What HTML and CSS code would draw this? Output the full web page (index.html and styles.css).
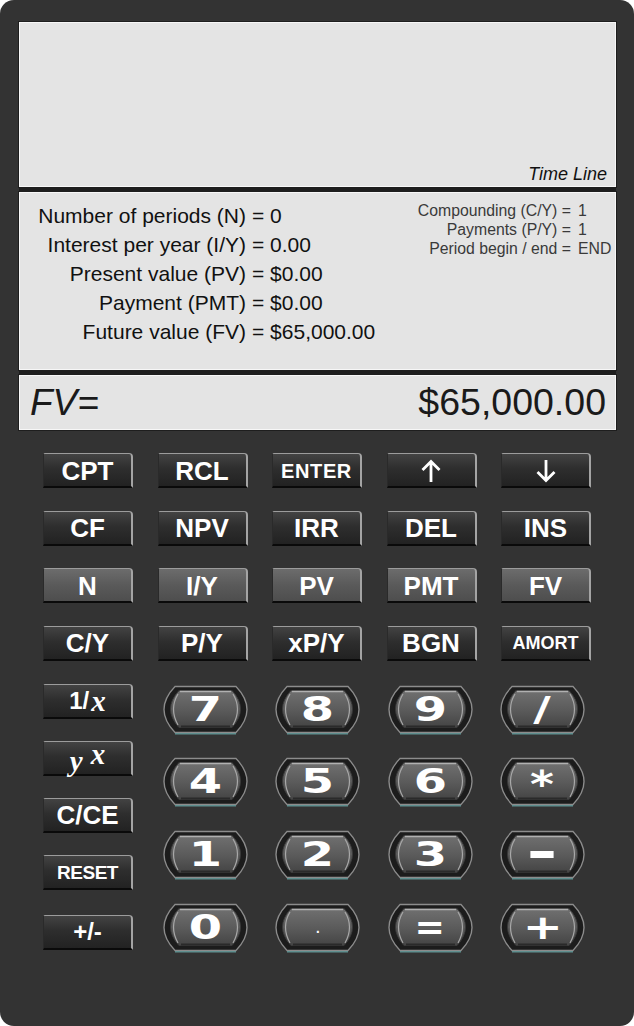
FILE: index.html
```html
<!DOCTYPE html>
<html>
<head>
<meta charset="utf-8">
<link rel="stylesheet" href="styles.css">
</head>
<body>
<svg class="defs" width="0" height="0" aria-hidden="true">
  <defs>
    <linearGradient id="face" x1="0" y1="0" x2="0" y2="1">
      <stop offset="0" stop-color="#707070"/>
      <stop offset="0.55" stop-color="#5a5a5a"/>
      <stop offset="1" stop-color="#444"/>
    </linearGradient>
    <symbol id="nkey" viewBox="0 0 85 50">
      <path d="M12,1.5 H73 Q95,24.5 73,47.5 H12 Q-10,24.5 12,1.5 Z" fill="#1c1c1c" stroke="#8c8c8c" stroke-width="1.3"/>
      <path d="M16,5.5 H69 Q86,24 69,42.5 H16 Q-1,24 16,5.5 Z" fill="url(#face)" stroke="#3a3a3a" stroke-width="1"/>
      <path d="M17,6.5 H68" stroke="#b0b0b0" stroke-width="1.4" fill="none"/>
      <path d="M15,9 Q6,24 15,40" stroke="#a8a8a8" stroke-width="1.2" fill="none"/>
      <path d="M70,9 Q79,24 70,40" stroke="#a8a8a8" stroke-width="1.2" fill="none"/>
      <path d="M18,41.5 H67" stroke="#2a2a2a" stroke-width="2" fill="none"/>
      <path d="M12,48.8 H73" stroke="#5f8f8f" stroke-width="1.6" fill="none"/>
    </symbol>
  </defs>
</svg>

<div class="calc">
  <div class="screen timeline"><span class="tl-label">Time Line</span></div>

  <div class="screen info">
    <div class="vars">
      <span class="lbl">Number of periods (N)</span><span class="val">= 0</span>
      <span class="lbl">Interest per year (I/Y)</span><span class="val">= 0.00</span>
      <span class="lbl">Present value (PV)</span><span class="val">= $0.00</span>
      <span class="lbl">Payment (PMT)</span><span class="val">= $0.00</span>
      <span class="lbl">Future value (FV)</span><span class="val">= $65,000.00</span>
    </div>
    <div class="settings">
      <span class="slbl">Compounding (C/Y) =</span><span class="sval">1</span>
      <span class="slbl">Payments (P/Y) =</span><span class="sval">1</span>
      <span class="slbl">Period begin / end =</span><span class="sval">END</span>
    </div>
  </div>

  <div class="screen result"><span class="res-lbl">FV=</span><span class="res-val">$65,000.00</span></div>

  <div class="keys-top">
    <div class="btn">CPT</div>
    <div class="btn">RCL</div>
    <div class="btn small">ENTER</div>
    <div class="btn"><svg class="arrow" viewBox="0 0 22 24"><path d="M11,23 V2.5 M2.5,11 L11,2.5 L19.5,11" fill="none" stroke="#fff" stroke-width="2.8"/></svg></div>
    <div class="btn"><svg class="arrow" viewBox="0 0 22 24"><path d="M11,1 V21.5 M2.5,13 L11,21.5 L19.5,13" fill="none" stroke="#fff" stroke-width="2.8"/></svg></div>

    <div class="btn">CF</div>
    <div class="btn">NPV</div>
    <div class="btn">IRR</div>
    <div class="btn">DEL</div>
    <div class="btn">INS</div>

    <div class="btn grey">N</div>
    <div class="btn grey">I/Y</div>
    <div class="btn grey">PV</div>
    <div class="btn grey">PMT</div>
    <div class="btn grey">FV</div>

    <div class="btn">C/Y</div>
    <div class="btn">P/Y</div>
    <div class="btn">xP/Y</div>
    <div class="btn">BGN</div>
    <div class="btn tiny">AMORT</div>
  </div>

  <div class="keys-bottom">
    <div class="leftcol">
      <div class="btn"><span class="one">1/</span><span class="ix">x</span></div>
      <div class="btn"><span class="iy">y</span><span class="ix sup">x</span></div>
      <div class="btn">C/CE</div>
      <div class="btn reset">RESET</div>
      <div class="btn pm">+/-</div>
    </div>
    <div class="numpad">
      <div class="nk"><svg class="nk-bg"><use href="#nkey"/></svg><span class="nk-t">7</span></div>
      <div class="nk"><svg class="nk-bg"><use href="#nkey"/></svg><span class="nk-t">8</span></div>
      <div class="nk"><svg class="nk-bg"><use href="#nkey"/></svg><span class="nk-t">9</span></div>
      <div class="nk"><svg class="nk-bg"><use href="#nkey"/></svg><span class="nk-t">/</span></div>

      <div class="nk"><svg class="nk-bg"><use href="#nkey"/></svg><span class="nk-t">4</span></div>
      <div class="nk"><svg class="nk-bg"><use href="#nkey"/></svg><span class="nk-t">5</span></div>
      <div class="nk"><svg class="nk-bg"><use href="#nkey"/></svg><span class="nk-t">6</span></div>
      <div class="nk"><svg class="nk-bg"><use href="#nkey"/></svg><span class="nk-t star">*</span></div>

      <div class="nk"><svg class="nk-bg"><use href="#nkey"/></svg><span class="nk-t">1</span></div>
      <div class="nk"><svg class="nk-bg"><use href="#nkey"/></svg><span class="nk-t">2</span></div>
      <div class="nk"><svg class="nk-bg"><use href="#nkey"/></svg><span class="nk-t">3</span></div>
      <div class="nk"><svg class="nk-bg"><use href="#nkey"/></svg><span class="nk-t"><span class="bar"></span></span></div>

      <div class="nk"><svg class="nk-bg"><use href="#nkey"/></svg><span class="nk-t">0</span></div>
      <div class="nk"><svg class="nk-bg"><use href="#nkey"/></svg><span class="nk-t dot">.</span></div>
      <div class="nk"><svg class="nk-bg"><use href="#nkey"/></svg><span class="nk-t eq">=</span></div>
      <div class="nk"><svg class="nk-bg"><use href="#nkey"/></svg><span class="nk-t">+</span></div>
    </div>
  </div>
</div>
</body>
</html>
```

FILE: styles.css
```css
html, body {
  margin: 0;
  padding: 0;
  background: #ffffff;
}

.defs {
  position: absolute;
  width: 0;
  height: 0;
  overflow: hidden;
}

.calc {
  width: 634px;
  height: 1026px;
  box-sizing: border-box;
  background: #333333;
  border-radius: 14px;
  padding: 22px 18px 0 19px;
  font-family: "Liberation Sans", Arial, sans-serif;
  display: flex;
  flex-direction: column;
}

.screen {
  background: #e4e4e4;
  border: 1px solid #f7f7f7;
  box-shadow: 0 0 0 1px #1e1e1e;
  box-sizing: border-box;
}

.timeline {
  height: 165px;
  display: flex;
  align-items: flex-end;
  justify-content: flex-end;
  padding: 0 8px 1px 0;
}

.tl-label {
  font-style: italic;
  font-size: 18px;
  color: #111;
  line-height: 21px;
}

.info {
  height: 178px;
  margin-top: 5px;
  display: flex;
  justify-content: space-between;
  box-shadow: 0 0 0 1px #1e1e1e, 0 -4px 0 0 #1e1e1e;
}

.vars {
  display: grid;
  grid-template-columns: 226px auto;
  column-gap: 6px;
  align-content: start;
  padding-top: 8px;
  font-size: 21px;
  line-height: 29px;
  color: #111;
}

.lbl {
  text-align: right;
  white-space: nowrap;
}

.val {
  white-space: nowrap;
}

.settings {
  display: grid;
  grid-template-columns: auto 31px;
  column-gap: 7px;
  align-content: start;
  padding: 8px 6px 0 0;
  font-size: 15.8px;
  line-height: 19px;
  color: #3a3a3a;
}

.slbl {
  text-align: right;
  white-space: nowrap;
}

.result {
  height: 55px;
  margin-top: 5px;
  display: flex;
  align-items: center;
  justify-content: space-between;
  padding: 0 9px 0 10px;
  color: #1a1a1a;
  box-shadow: 0 0 0 1px #1e1e1e, 0 -4px 0 0 #1e1e1e;
}

.res-lbl {
  font-style: italic;
  font-size: 37px;
}

.res-val {
  font-size: 37.5px;
}

.keys-top {
  margin: 23px 0 0 24px;
  display: grid;
  grid-template-columns: repeat(5, 90px);
  grid-auto-rows: 35px;
  column-gap: 24.5px;
  row-gap: 22.5px;
}

.btn {
  box-sizing: border-box;
  height: 35px;
  width: 90px;
  display: flex;
  align-items: center;
  justify-content: center;
  background: linear-gradient(#434343, #2e2e2e 45%, #222 100%);
  border-top: 1px solid #9c9c9c;
  border-right: 2px solid #a4a4a4;
  border-bottom: 2px solid #0a0a0a;
  border-left: 1px solid #2a2a2a;
  border-radius: 2px 4px 0 0;
  color: #fff;
  font-weight: bold;
  font-size: 26px;
  line-height: 1;
  padding-top: 1px;
  white-space: nowrap;
}

.btn.grey {
  background: linear-gradient(#6c6c6c, #5a5a5a 50%, #4e4e4e);
}

.btn.small {
  font-size: 20px;
  letter-spacing: 0.6px;
}

.btn.tiny {
  font-size: 18px;
}

.btn.reset {
  font-size: 19px;
  letter-spacing: -0.5px;
}

.btn.pm {
  font-size: 24px;
}

.arrow {
  width: 22px;
  height: 24px;
}

.one {
  font-size: 24px;
}

.ix {
  font-family: "Liberation Serif", "Times New Roman", serif;
  font-style: italic;
  font-size: 29px;
  margin-left: 2px;
}

.iy {
  font-family: "Liberation Serif", "Times New Roman", serif;
  font-style: italic;
  font-size: 29px;
  margin-right: 6px;
  position: relative;
  top: 3px;
}

.ix.sup {
  position: relative;
  top: -4px;
}

.keys-bottom {
  margin-top: 23px;
  display: flex;
}

.leftcol {
  margin-left: 24px;
  display: flex;
  flex-direction: column;
  gap: 22px;
}

.leftcol .btn:last-child {
  margin-top: 3px;
}

.numpad {
  margin: 1px 0 0 30px;
  display: grid;
  grid-template-columns: repeat(4, 85px);
  grid-auto-rows: 48px;
  column-gap: 27.3px;
  row-gap: 24.7px;
}

.nk {
  position: relative;
  width: 85px;
  height: 48px;
  display: flex;
  align-items: center;
  justify-content: center;
}

.nk-bg {
  position: absolute;
  left: 0;
  top: 0;
  width: 85px;
  height: 50px;
}

.nk-t {
  position: relative;
  color: #fff;
  font-family: "DejaVu Sans", sans-serif;
  font-weight: bold;
  font-size: 33px;
  line-height: 1;
  transform: scaleX(1.45);
  margin-top: 1px;
}

.nk-t.star {
  font-size: 38px;
  transform: scaleX(1.2);
  margin-top: 6px;
}

.nk-t.eq {
  transform: scaleX(1.1);
}

.nk-t .bar {
  display: block;
  width: 16px;
  height: 7px;
  background: #fff;
}

.nk-t.dot {
  font-size: 18px;
  transform: none;
  font-weight: normal;
}
```
